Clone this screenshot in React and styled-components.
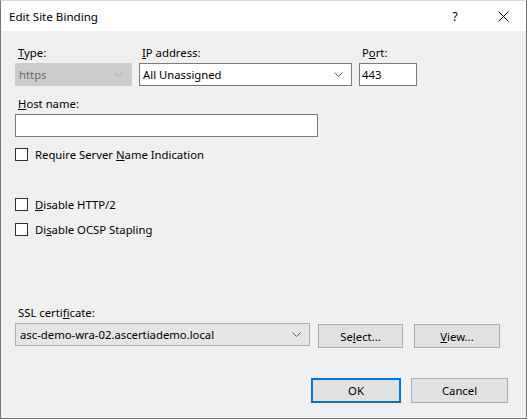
import styled, { createGlobalStyle } from "styled-components";

const GlobalStyle = createGlobalStyle`
  html, body {
    margin: 0;
    padding: 0;
    background: #f0f0f0;
  }
  body {
    font-family: "Noto Sans", "Liberation Sans", sans-serif;
    font-size: 11.3px;
    color: #000;
  }
`;

const Chevron = ({ color = "#606060" }) => (
  <svg width="9" height="5" viewBox="0 0 9 5">
    <polyline points="0.5,0.5 4.5,4.5 8.5,0.5" fill="none" stroke={color} strokeWidth="1" />
  </svg>
);

const Key = ({ children }) => <u>{children}</u>;

const App = () => {
  return (
    <>
      <GlobalStyle />
      <Window>
        <TitleBar>
          <Title>Edit Site Binding</Title>
          <HelpButton>?</HelpButton>
          <CloseButton>
            <svg width="11" height="11" viewBox="0 0 11 11">
              <path d="M0.5 0.5 L10.5 10.5 M10.5 0.5 L0.5 10.5" stroke="#000" strokeWidth="1" />
            </svg>
          </CloseButton>
        </TitleBar>

        <Body>
          <Row>
            <Field>
              <Label><Key>T</Key>ype:</Label>
              <Combo $w={117} $disabled>
                <span>https</span>
                <Chevron color="#a8a8a8" />
              </Combo>
            </Field>
            <Field>
              <Label><Key>I</Key>P address:</Label>
              <Combo $w={213}>
                <span>All Unassigned</span>
                <Chevron />
              </Combo>
            </Field>
            <Field>
              <Label>P<Key>o</Key>rt:</Label>
              <TextBox $w={58}>443</TextBox>
            </Field>
          </Row>

          <Field $top={10}>
            <Label><Key>H</Key>ost name:</Label>
            <TextBox $w={303} />
          </Field>

          <Check $top={9}>
            <Box />
            <span>Require Server <Key>N</Key>ame Indication</span>
          </Check>

          <Check $top={34}>
            <Box />
            <span><Key>D</Key>isable HTTP/2</span>
          </Check>
          <Check $top={9}>
            <Box />
            <span>Di<Key>s</Key>able OCSP Stapling</span>
          </Check>

          <Field $top={68}>
            <Label>SSL certi<Key>f</Key>icate:</Label>
            <Row $gap={8}>
              <Combo $w={295} $flat>
                <span>asc-demo-wra-02.ascertiademo.local</span>
                <Chevron />
              </Combo>
              <Button $w={85} $down={1}>Se<Key>l</Key>ect...</Button>
              <Button $w={86} $down={1} $left={3}><Key>V</Key>iew...</Button>
            </Row>
          </Field>

          <Footer>
            <Button $w={90} $h={25} $primary>OK</Button>
            <Button $w={97} $h={25}>Cancel</Button>
          </Footer>
        </Body>
      </Window>
    </>
  );
};

export default App;

const Window = styled.div`
  width: 527px;
  height: 419px;
  box-sizing: border-box;
  border: 1px solid #777777;
  border-top-color: #d8d8d8;
  background: #f0f0f0;
  display: flex;
  flex-direction: column;
`;

const TitleBar = styled.div`
  height: 30px;
  background: #ffffff;
  display: flex;
  align-items: center;
  padding-left: 8px;
`;

const Title = styled.div`
  flex: 1;
  font-size: 11.6px;
`;

const HelpButton = styled.div`
  width: 46px;
  text-align: center;
  font-size: 12px;
  margin-right: 2px;
`;

const CloseButton = styled.div`
  width: 46px;
  height: 30px;
  display: flex;
  align-items: center;
  justify-content: center;
`;

const Body = styled.div`
  flex: 1;
  display: flex;
  flex-direction: column;
  padding: 14px 0 0 14px;
`;

const Row = styled.div`
  display: flex;
  gap: ${(p) => p.$gap ?? 7}px;
  align-items: flex-start;
`;

const Field = styled.div`
  display: flex;
  flex-direction: column;
  margin-top: ${(p) => p.$top || 0}px;
`;

const Label = styled.div`
  height: 16px;
  line-height: 16px;
  padding-left: 3px;
  margin-bottom: 2px;
`;

const Combo = styled.div`
  width: ${(p) => p.$w}px;
  height: 23px;
  box-sizing: border-box;
  display: flex;
  align-items: center;
  justify-content: space-between;
  padding: 0 8px 0 3px;
  border: 1px solid ${(p) => (p.$disabled ? "#cccccc" : p.$flat ? "#adadad" : "#7a7a7a")};
  background: ${(p) => (p.$disabled ? "#cccccc" : p.$flat ? "#e5e5e5" : "#ffffff")};
  color: ${(p) => (p.$disabled ? "#6d6d6d" : "#000")};
  padding-left: ${(p) => (p.$flat ? 4 : 3)}px;
`;

const TextBox = styled.div`
  width: ${(p) => p.$w}px;
  height: 23px;
  box-sizing: border-box;
  border: 1px solid #7a7a7a;
  background: #ffffff;
  display: flex;
  align-items: center;
  padding-left: 2px;
`;

const Check = styled.label`
  display: flex;
  align-items: center;
  gap: 7px;
  height: 16px;
  margin-top: ${(p) => p.$top || 0}px;
`;

const Box = styled.span`
  width: 13px;
  height: 13px;
  box-sizing: border-box;
  border: 1px solid #333333;
  background: #ffffff;
`;

const Button = styled.div`
  width: ${(p) => p.$w}px;
  height: ${(p) => p.$h || 24}px;
  box-sizing: border-box;
  margin-top: ${(p) => p.$down || 0}px;
  margin-left: ${(p) => p.$left || 0}px;
  display: flex;
  align-items: center;
  justify-content: center;
  background: #e1e1e1;
  border: ${(p) => (p.$primary ? "2px solid #0078d7" : "1px solid #adadad")};
`;

const Footer = styled.div`
  display: flex;
  gap: 10px;
  margin-top: 30px;
  padding-left: 296px;
`;
